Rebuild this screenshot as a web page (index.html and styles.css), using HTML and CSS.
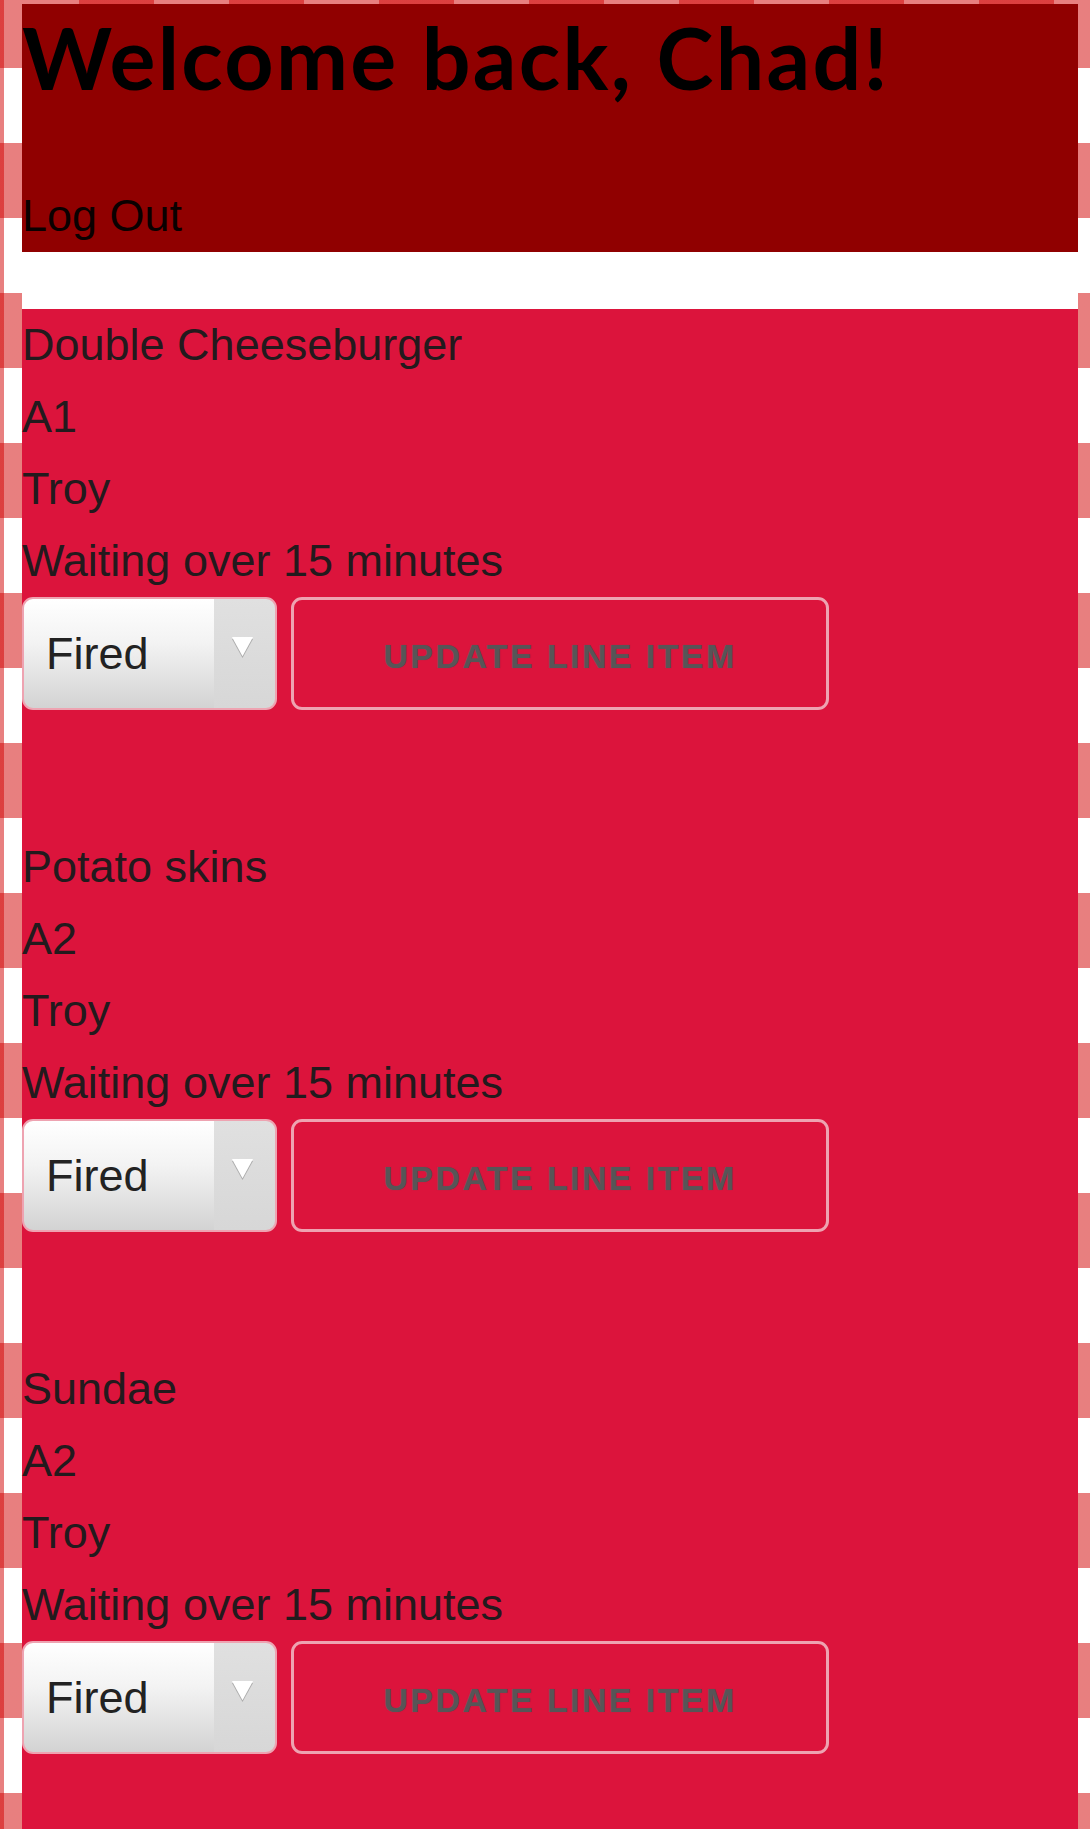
FILE: index.html
```
<!DOCTYPE html>
<html lang="en">
<head>
<meta charset="utf-8">
<title>Welcome back, Chad!</title>
<link rel="stylesheet" href="styles.css">
</head>
<body>
<div class="page">
  <header class="header">
    <h1 class="title">Welcome back, Chad!</h1>
    <a class="logout" href="#">Log Out</a>
  </header>
  <main class="list">
    <section class="item">
      <p class="line">Double Cheeseburger</p>
      <p class="line">A1</p>
      <p class="line">Troy</p>
      <p class="line">Waiting over 15 minutes</p>
      <form class="item-form">
        <div class="select-wrap">
          <select class="status"><option>Fired</option></select>
          <svg class="arrow" width="24" height="24" viewBox="0 0 24 24" aria-hidden="true"><polygon points="1,2 23,2 12,22" fill="rgba(0,0,0,0.22)"/><polygon points="1,0 23,0 12,20" fill="#fff"/></svg>
        </div>
        <button class="update" type="button">Update line item</button>
      </form>
    </section>
    <section class="item">
      <p class="line">Potato skins</p>
      <p class="line">A2</p>
      <p class="line">Troy</p>
      <p class="line">Waiting over 15 minutes</p>
      <form class="item-form">
        <div class="select-wrap">
          <select class="status"><option>Fired</option></select>
          <svg class="arrow" width="24" height="24" viewBox="0 0 24 24" aria-hidden="true"><polygon points="1,2 23,2 12,22" fill="rgba(0,0,0,0.22)"/><polygon points="1,0 23,0 12,20" fill="#fff"/></svg>
        </div>
        <button class="update" type="button">Update line item</button>
      </form>
    </section>
    <section class="item">
      <p class="line">Sundae</p>
      <p class="line">A2</p>
      <p class="line">Troy</p>
      <p class="line">Waiting over 15 minutes</p>
      <form class="item-form">
        <div class="select-wrap">
          <select class="status"><option>Fired</option></select>
          <svg class="arrow" width="24" height="24" viewBox="0 0 24 24" aria-hidden="true"><polygon points="1,2 23,2 12,22" fill="rgba(0,0,0,0.22)"/><polygon points="1,0 23,0 12,20" fill="#fff"/></svg>
        </div>
        <button class="update" type="button">Update line item</button>
      </form>
    </section>
  </main>
</div>
</body>
</html>
```
FILE: styles.css
```
html {
  background-color: #fff;
  background-image:
    repeating-linear-gradient(90deg, rgba(209, 0, 0, 0.5) 0 4px, transparent 4px 79px, rgba(209, 0, 0, 0.5) 79px 150px),
    repeating-linear-gradient(180deg, rgba(209, 0, 0, 0.5) 0 68px, transparent 68px 143px, rgba(209, 0, 0, 0.5) 143px 150px);
}

body {
  margin: 0;
  font-family: "Liberation Sans", Arial, sans-serif;
  font-size: 45px;
  color: #231a1d;
}

.page {
  margin: 4px 12px 0 22px;
  background: #fff;
}

.header {
  background: #900000;
  padding-top: 10px;
}

.title {
  margin: 0 0 80px;
  font-family: Lato, "Open Sans", sans-serif;
  font-weight: 700;
  font-size: 86px;
  line-height: 86px;
  letter-spacing: 2.3px;
  color: #000;
}

.logout {
  display: block;
  line-height: 72px;
  color: #0a0000;
  text-decoration: none;
}

.list {
  margin-top: 57px;
  background: #dc143c;
}

.item {
  height: 522px;
}

.line {
  margin: 0;
  line-height: 72px;
}

.item-form {
  display: flex;
  gap: 14px;
  margin: 0;
}

.select-wrap {
  position: relative;
  width: 255px;
  height: 113px;
}

.status {
  appearance: none;
  -webkit-appearance: none;
  box-sizing: border-box;
  width: 255px;
  height: 113px;
  margin: 0;
  padding: 0 0 0 22px;
  border: 2px solid #eea3b1;
  border-radius: 11px;
  font-family: "Liberation Sans", Arial, sans-serif;
  font-size: 45px;
  color: #222;
  background-color: #e6e6e6;
  background-image:
    linear-gradient(180deg, #e0e0e0, #d7d7d7),
    linear-gradient(90deg, #cfcfcf, #cfcfcf),
    linear-gradient(180deg, #ffffff 0%, #f3f3f3 40%, #d3d3d3 100%);
  background-size: 61px 100%, 1px 100%, 100% 100%;
  background-position: right top, 190px top, left top;
  background-repeat: no-repeat;
}

.arrow {
  position: absolute;
  left: 209px;
  top: 40px;
  width: 23px;
  height: 23px;
  pointer-events: none;
}

.update {
  box-sizing: border-box;
  width: 538px;
  height: 113px;
  margin: 0;
  padding: 6px 0 0;
  border: 3px solid #eea3b1;
  border-radius: 11px;
  background: transparent;
  font-family: "Liberation Sans", Arial, sans-serif;
  font-weight: 700;
  font-size: 34px;
  letter-spacing: 2.4px;
  text-transform: uppercase;
  color: #575557;
  text-shadow: 0 0 1px rgba(87, 85, 87, 0.7);
}
```
